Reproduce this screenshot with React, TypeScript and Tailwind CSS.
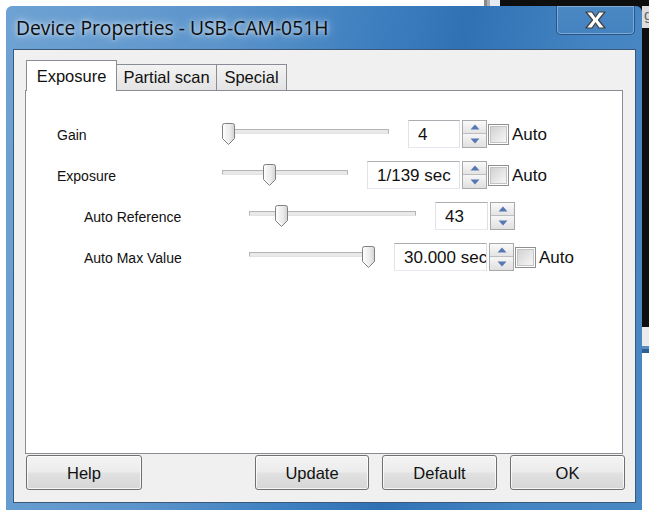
import React from "react";

type Row = {
  label: string;
  indent: string;
  track: string;
  thumb: number;
  value: string;
  box: string;
  auto: boolean;
};

const rows: Row[] = [
  { label: "Gain", indent: "", track: "w-[167px]", thumb: 0, value: "4", box: "w-[52px]", auto: true },
  { label: "Exposure", indent: "", track: "w-[126px]", thumb: 41, value: "1/139 sec", box: "w-[93px]", auto: true },
  { label: "Auto Reference", indent: "ml-[27px]", track: "w-[167px]", thumb: 26, value: "43", box: "w-[53px]", auto: false },
  { label: "Auto Max Value", indent: "ml-[27px]", track: "w-[126px]", thumb: 113, value: "30.000 sec", box: "w-[93px]", auto: true },
];

function Thumb() {
  return (
    <svg width="13" height="23" viewBox="0 0 13 23">
      <defs>
        <linearGradient id="thumbFill" x1="0" y1="0" x2="1" y2="0">
          <stop offset="0" stopColor="#fbfbfb" />
          <stop offset="0.6" stopColor="#ececec" />
          <stop offset="1" stopColor="#d2d2d2" />
        </linearGradient>
      </defs>
      <path
        d="M2.5 0.5 H10.5 Q12.5 0.5 12.5 2.5 V15.5 L6.5 21.5 L0.5 15.5 V2.5 Q0.5 0.5 2.5 0.5 Z"
        fill="url(#thumbFill)"
        stroke="#808080"
        strokeWidth="1"
      />
      <path d="M2 2.5 V15 L6.5 19.5" fill="none" stroke="#ffffff" strokeWidth="1" />
    </svg>
  );
}

function Slider({ track, thumb }: { track: string; thumb: number }) {
  return (
    <div className={`relative h-[28px] shrink-0 ${track}`}>
      <div className="absolute left-0 right-0 top-[9px] h-[5px] rounded-[1px] border border-[#b4b4b4] border-b-[#e2e2e2] bg-[#e8eaea]" />
      <div className="absolute top-[3px]" style={{ left: thumb }}>
        <Thumb />
      </div>
    </div>
  );
}

function Spin() {
  return (
    <div className="ml-[2px] flex h-[28px] w-[25px] shrink-0 flex-col border border-[#a9a9a9] bg-[#f3f3f3]">
      <div className="flex h-1/2 items-center justify-center border-b border-[#bdbdbd] bg-[linear-gradient(to_bottom,#fafafa,#e4e4e4)]">
        <svg width="10" height="6" viewBox="0 0 10 6">
          <path d="M5 0.5 L9.5 5.5 H0.5 Z" fill="#5577b4" />
        </svg>
      </div>
      <div className="flex h-1/2 items-center justify-center bg-[linear-gradient(to_bottom,#f6f6f6,#e0e0e0)]">
        <svg width="10" height="6" viewBox="0 0 10 6">
          <path d="M0.5 0.5 H9.5 L5 5.5 Z" fill="#5577b4" />
        </svg>
      </div>
    </div>
  );
}

function Check() {
  return (
    <div className="ml-[1px] flex h-[21px] w-[21px] shrink-0 items-center justify-center border border-[#8e8f8f] bg-white">
      <div className="h-[17px] w-[17px] border border-[#c4c4c4] bg-[linear-gradient(135deg,#d2d2d2,#f7f7f7)]" />
    </div>
  );
}

function Button({ label, width }: { label: string; width: string }) {
  return (
    <div
      className={`flex h-[35px] items-center justify-center rounded-[3px] border border-[#707070] bg-[linear-gradient(to_bottom,#f4f4f4_0%,#ececec_48%,#e1e1e1_52%,#d6d6d6_100%)] pt-[1px] text-[16.5px] text-[#111] shadow-[inset_0_0_0_1px_rgba(255,255,255,0.75)] ${width}`}
    >
      {label}
    </div>
  );
}

export default function App() {
  return (
    <div className="relative h-[510px] w-[649px] overflow-hidden bg-white font-['Liberation_Sans',Arial,sans-serif]">
      {/* desktop windows behind the dialog */}
      <div className="absolute left-[484px] top-0 h-[6px] w-[3px] bg-[#8a8a8a]" />
      <div className="absolute left-[487px] top-0 h-[6px] w-[3px] bg-[#b0b0b0]" />
      <div className="absolute left-[490px] top-0 h-[6px] w-[10px] bg-[#e4ebf2]" />
      <div className="absolute left-[500px] top-0 h-[327px] w-[149px] bg-[#0e0e0e]" />
      <div className="absolute left-[642px] top-[6px] h-[22px] w-[7px] overflow-hidden bg-[#dcdcdc]">
        <span className="absolute left-[2px] top-[1px] text-[15px] leading-none text-[#666]">g</span>
      </div>
      <div className="absolute left-[642px] top-[327px] h-[19px] w-[7px] bg-[#ebebeb]" />
      <div className="absolute left-[642px] top-[346px] h-[3px] w-[7px] bg-[#5a8cc0]" />
      <div className="absolute left-[642px] top-[349px] h-[4px] w-[7px] bg-[#2b5f96]" />

      {/* dialog window */}
      <div className="absolute left-[6px] top-[6px] h-[504px] w-[636px] rounded-t-[6px] bg-[linear-gradient(100deg,#6ea2d4_0%,#5c95cb_30%,#3d7ebf_52%,#2f72b4_64%,#4584c2_82%,#4a88c4_100%)]">
        <div className="relative flex h-[43px] items-center pl-[10px]">
          <span className="font-['Open_Sans',sans-serif] text-[19.3px] leading-none text-[#0c0c0c] [text-shadow:0_0_10px_rgba(255,255,255,0.85),0_0_4px_rgba(255,255,255,0.6)]">
            Device Properties - USB-CAM-051H
          </span>
          <div className="absolute left-[550px] top-0 flex h-[29px] w-[79px] items-center justify-center rounded-b-[5px] border border-t-0 border-[#24568a] bg-[linear-gradient(to_bottom,#4a88c4,#4583c0)] shadow-[inset_0_0_0_1px_rgba(255,255,255,0.3)]">
            <svg width="21" height="18" viewBox="0 0 21 18">
              <polygon
                points="1,1 7,1 10.5,6 14,1 20,1 13.5,9 20,17 14,17 10.5,12 7,17 1,17 7.5,9"
                fill="#ffffff"
                stroke="#3f3f3f"
                strokeWidth="1.2"
                strokeLinejoin="round"
              />
            </svg>
          </div>
        </div>

        <div className="ml-[7px] flex h-[454px] w-[623px] flex-col border border-[#3b5878] bg-[#f0f0f0] pb-[12px] pl-[11px] pr-[12px] pt-[10px]">
          {/* tabs */}
          <div className="relative z-10 flex h-[30px] items-end pl-[1px]">
            <div className="-mb-[1px] flex h-[31px] w-[91px] items-center justify-center border border-b-0 border-[#898c95] bg-white text-[16.5px] text-[#111]">
              Exposure
            </div>
            <div className="-ml-[1px] flex h-[26px] w-[101px] items-center justify-center border border-b-0 border-[#898c95] bg-[linear-gradient(to_bottom,#f3f3f3,#e3e3e3)] text-[16.5px] text-[#111]">
              Partial scan
            </div>
            <div className="-ml-[1px] flex h-[26px] w-[71px] items-center justify-center border border-b-0 border-[#898c95] bg-[linear-gradient(to_bottom,#f3f3f3,#e3e3e3)] text-[16.5px] text-[#111]">
              Special
            </div>
          </div>

          {/* tab page */}
          <div className="flex h-[364px] flex-col gap-[13px] border border-[#898c95] bg-white pl-[31px] pt-[29px]">
            {rows.map((r) => (
              <div key={r.label} className={`flex h-[28px] items-center ${r.indent}`}>
                <div className="w-[165px] shrink-0 pt-[2px] text-[14px] text-[#111]">{r.label}</div>
                <Slider track={r.track} thumb={r.thumb} />
                <div
                  className={`ml-[19px] flex h-[28px] shrink-0 items-center overflow-hidden whitespace-nowrap border border-[#abadb3] border-b-[#e3e9ef] border-l-[#e2e3ea] border-r-[#dbdfe6] bg-white pl-[9px] pt-[1px] text-[17px] text-[#111] ${r.box}`}
                >
                  {r.value}
                </div>
                <Spin />
                {r.auto && (
                  <>
                    <Check />
                    <span className="ml-[3px] pt-[1px] text-[17px] text-[#111]">Auto</span>
                  </>
                )}
              </div>
            ))}
          </div>

          {/* buttons */}
          <div className="-mr-[2px] ml-[1px] mt-[1px] flex items-center">
            <Button label="Help" width="w-[116px]" />
            <div className="flex-1" />
            <div className="flex gap-[13px]">
              <Button label="Update" width="w-[114px]" />
              <Button label="Default" width="w-[115px]" />
              <Button label="OK" width="w-[115px]" />
            </div>
          </div>
        </div>
      </div>
    </div>
  );
}
